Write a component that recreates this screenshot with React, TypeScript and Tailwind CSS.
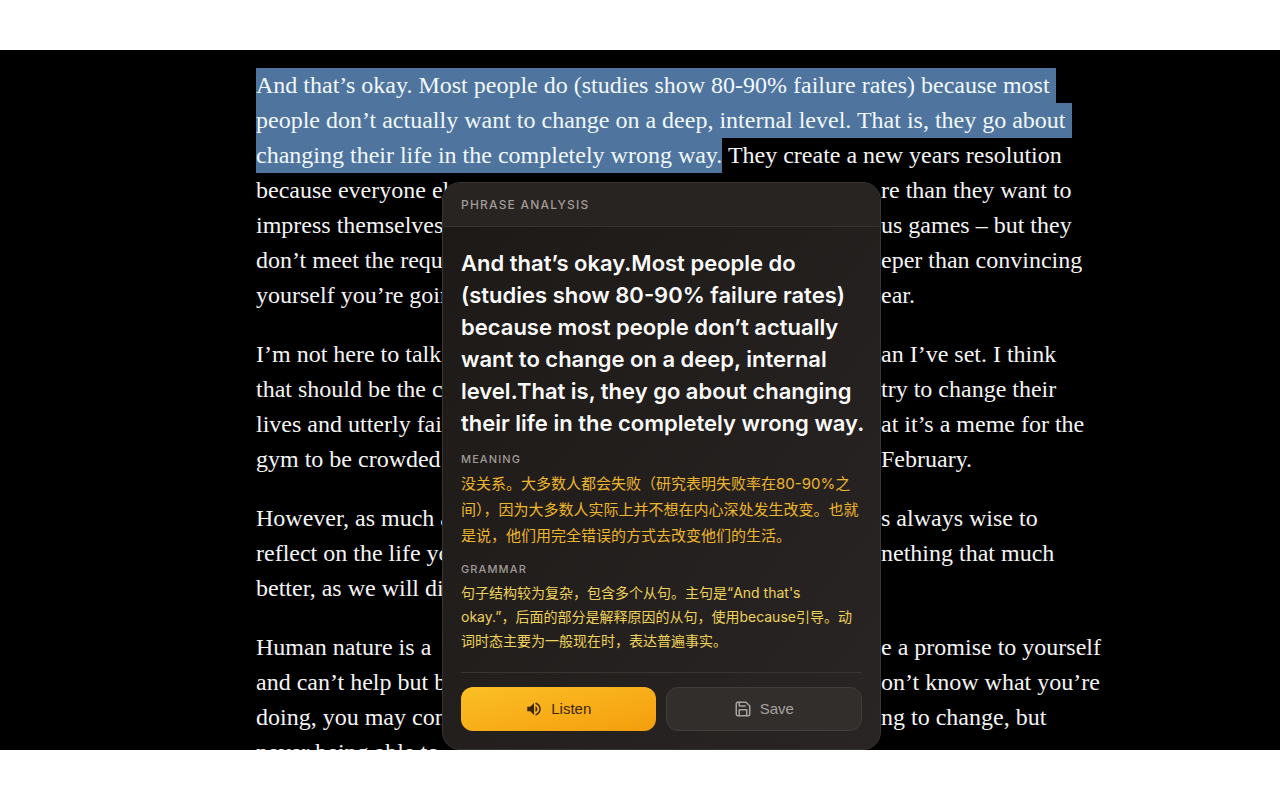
import { clsx } from "clsx";

type Line = {
	text: string;
	rest?: string;
	marked?: boolean;
};

const paragraphs: Line[][] = [
	[
		{
			text: "And that’s okay. Most people do (studies show 80-90% failure rates) because most ",
			marked: true,
		},
		{
			text: "people don’t actually want to change on a deep, internal level. That is, they go about ",
			marked: true,
		},
		{
			text: "changing their life in the completely wrong way.",
			rest: " They create a new years resolution",
			marked: true,
		},
		{ text: "because everyone el", rest: "re than they want to" },
		{ text: "impress themselves", rest: "us games – but they" },
		{ text: "don’t meet the requ", rest: "eper than convincing" },
		{ text: "yourself you’re goin", rest: "ear." },
	],
	[
		{ text: "I’m not here to talk", rest: "an I’ve set. I think" },
		{ text: "that should be the c", rest: "try to change their" },
		{ text: "lives and utterly fail", rest: "at it’s a meme for the" },
		{ text: "gym to be crowded", rest: "February." },
	],
	[
		{ text: "However, as much a", rest: "s always wise to" },
		{ text: "reflect on the life yo", rest: "nething that much" },
		{ text: "better, as we will di" },
	],
	[
		{ text: "Human nature is a", rest: "e a promise to yourself" },
		{ text: "and can’t help but b", rest: "on’t know what you’re" },
		{ text: "doing, you may con", rest: "ng to change, but" },
		{ text: "never being able to" },
	],
];

const phrase = [
	"And that’s okay.Most people do",
	"(studies show 80-90% failure rates)",
	"because most people don’t actually",
	"want to change on a deep, internal",
	"level.That is, they go about changing",
	"their life in the completely wrong way.",
];

const meaning = [
	"没关系。大多数人都会失败（研究表明失败率在80-90%之",
	"间），因为大多数人实际上并不想在内心深处发生改变。也就",
	"是说，他们用完全错误的方式去改变他们的生活。",
];

const grammar = [
	"句子结构较为复杂，包含多个从句。主句是“And that's",
	"okay.”，后面的部分是解释原因的从句，使用because引导。动",
	"词时态主要为一般现在时，表达普遍事实。",
];

export default function App() {
	return (
		<div className="min-h-screen bg-white py-[50px]">
			<main className="relative h-[calc(100vh-100px)] overflow-hidden bg-black pt-[18px] pl-64">
				<Article />
				<PhrasePopup />
			</main>
		</div>
	);
}

function Article() {
	return (
		<article className="flex flex-col gap-6 font-['Liberation_Serif',serif] text-[24px] leading-[35px] text-[#f4f4f4]">
			{paragraphs.map((lines) => (
				<p key={lines[0].text}>
					{lines.map((line) => (
						<ArticleLine key={line.text} {...line} />
					))}
				</p>
			))}
		</article>
	);
}

function ArticleLine({ text, rest, marked }: Line) {
	return (
		<span className="flex whitespace-pre">
			<span className={clsx(marked ? "bg-[#4f749d] text-[#f1f8fd]" : "w-[625px]")}>
				{text}
			</span>
			{rest && <span>{rest}</span>}
		</span>
	);
}

function PhrasePopup() {
	return (
		<section className="absolute top-[132px] left-[442px] w-[439px] overflow-hidden rounded-[18px] border border-[#393533] bg-linear-to-br from-[#1d1917] to-[#292524] font-['Inter','Noto_Sans_CJK_SC',sans-serif]">
			<header className="flex h-11 items-center border-b border-[#36322f] bg-[#282422] px-[18px]">
				<h2 className="text-[12px] leading-4 font-medium tracking-widest text-[#a09b97]">
					PHRASE ANALYSIS
				</h2>
			</header>
			<div className="px-[18px] pt-5 pb-[18px]">
				<Lines
					lines={phrase}
					className="text-[22px] leading-8 font-semibold text-[#fafaf9]"
				/>
				<Label>MEANING</Label>
				<Lines lines={meaning} className="text-[15px] leading-[26px] text-[#eeb52e]" />
				<Label>GRAMMAR</Label>
				<Lines lines={grammar} className="text-[14px] leading-6 text-[#eed25b]" />
				<div className="mt-[19px] flex gap-[10px] border-t border-[#393532] pt-[14px] font-['Liberation_Sans',sans-serif] text-[15px]">
					<button
						type="button"
						className="flex h-11 flex-1 items-center justify-center gap-2 rounded-xl bg-linear-to-br from-[#fbbf24] to-[#f59e0b] text-[#3a2708]"
					>
						<SpeakerIcon />
						Listen
					</button>
					<button
						type="button"
						className="flex h-11 flex-1 items-center justify-center gap-2 rounded-xl border border-[#413d3a] bg-[#322e2c] text-[#a8a29e]"
					>
						<SaveIcon />
						Save
					</button>
				</div>
			</div>
		</section>
	);
}

function Label({ children }: { children: string }) {
	return (
		<h3 className="mt-3 mb-1 text-[11px] leading-4 font-medium tracking-widest text-[#a09b97]">
			{children}
		</h3>
	);
}

function Lines({ lines, className }: { lines: string[]; className: string }) {
	return (
		<p className={clsx("whitespace-nowrap", className)}>
			{lines.map((line) => (
				<span key={line} className="block">
					{line}
				</span>
			))}
		</p>
	);
}

function SpeakerIcon() {
	return (
		<svg viewBox="0 0 24 24" className="size-[18px]" fill="currentColor" aria-hidden="true">
			<path d="M3 9v6h4l5 5V4L7 9H3zm13.5 3c0-1.77-1.02-3.29-2.5-4.03v8.05c1.48-.73 2.5-2.25 2.5-4.02zM14 3.23v2.06c2.89.86 5 3.54 5 6.71s-2.11 5.85-5 6.71v2.06c4.01-.91 7-4.49 7-8.77s-2.99-7.86-7-8.77z" />
		</svg>
	);
}

function SaveIcon() {
	return (
		<svg
			viewBox="0 0 24 24"
			className="size-[18px]"
			fill="none"
			stroke="currentColor"
			strokeWidth="2"
			strokeLinecap="round"
			strokeLinejoin="round"
			aria-hidden="true"
		>
			<path d="M19 21H5a2 2 0 0 1-2-2V5a2 2 0 0 1 2-2h11l5 5v11a2 2 0 0 1-2 2z" />
			<path d="M17 21v-8H7v8" />
			<path d="M7 3v5h8" />
		</svg>
	);
}
